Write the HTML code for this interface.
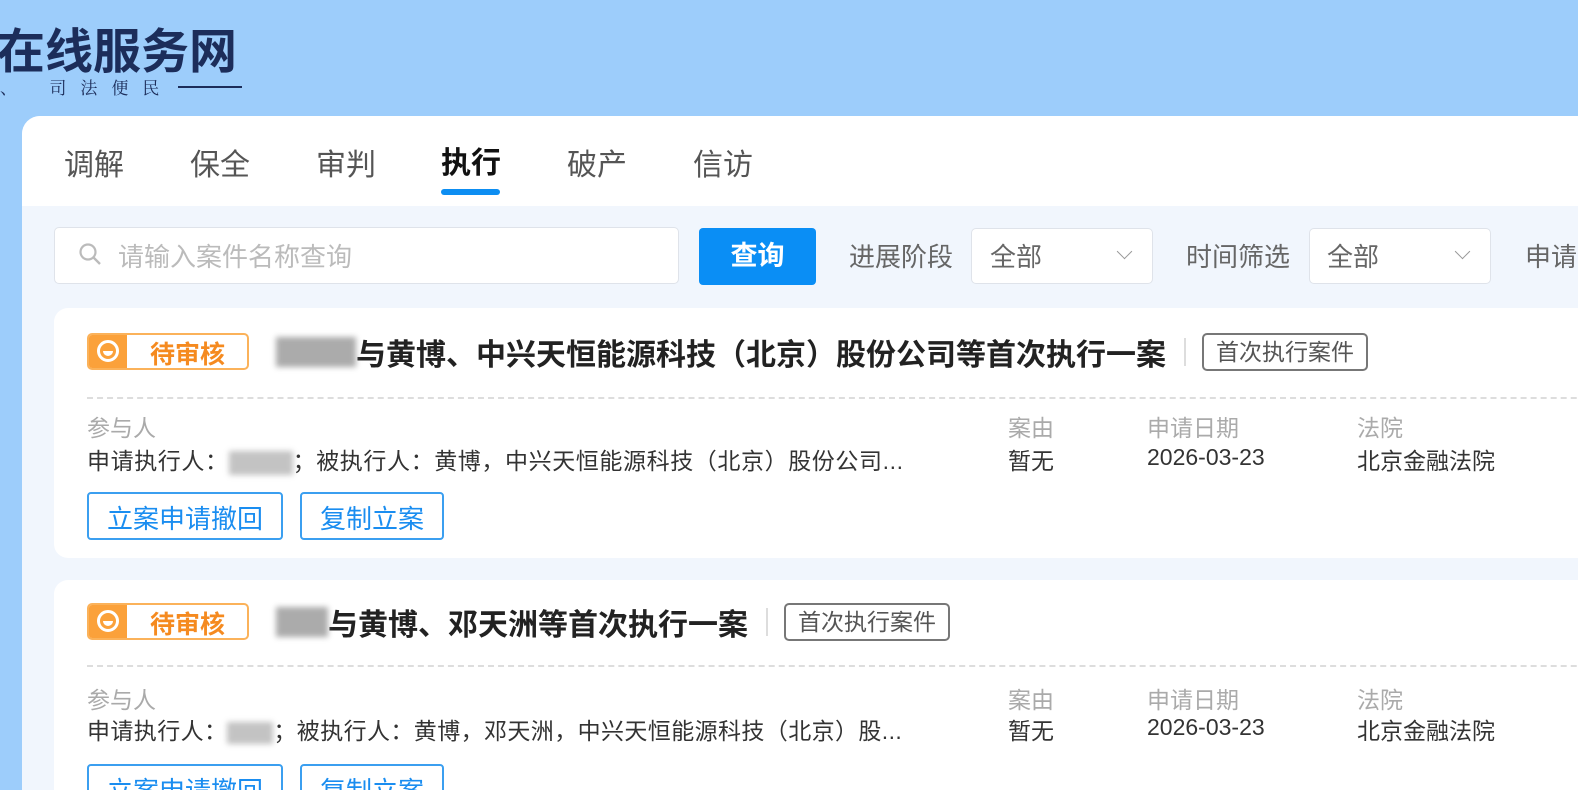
<!DOCTYPE html>
<html><head><meta charset="utf-8"><style>
*{margin:0;padding:0;box-sizing:border-box}
html,body{overflow:hidden}
body{width:1578px;height:790px;overflow:hidden;background:#9dcdfb;font-family:"Liberation Sans","Noto Sans CJK SC",sans-serif;position:relative}
.a{position:absolute;white-space:nowrap}
.logo{left:-3px;top:12px;font-size:48px;font-weight:bold;color:#1c2d5a;letter-spacing:0}
.slog{left:0;top:74px;font-size:17px;color:#1c2d5a;font-family:"Noto Serif CJK SC",serif;letter-spacing:14px}
.panel{left:22px;top:116px;width:1556px;height:674px;background:#f1f6fd;border-radius:18px 0 0 0;overflow:hidden}
.tabs{left:0;top:0;width:100%;height:90px;background:#fff}
.tab{top:24px;font-size:30px;color:#555}
.inp{background:#fff;border:1px solid #dfe3ea;border-radius:5px}
.card{background:#fff;border-radius:14px;width:1600px;overflow:hidden}
.badge{width:162px;height:37px;border:2px solid #fbb25a;border-radius:5px;background:#fff;overflow:hidden}
.badge .l{position:absolute;left:0;top:0;width:38px;height:33px;background:#fba13a}
.badge .l i{position:absolute;left:8px;top:5px;width:22px;height:22px;border:3px solid #fff;border-radius:50%}
.badge .l i:after{content:"";position:absolute;left:3px;top:3px;width:10px;height:10px;background:#fff;border-radius:50%;clip-path:inset(50% 0 0 0)}
.badge span{position:absolute;left:61px;top:0px;font-size:25px;font-weight:bold;color:#f58a1f}
.blur{display:inline-block;background:#888;filter:blur(3px);opacity:.7;vertical-align:middle}
.row{display:flex;align-items:center}
.title{font-size:30px;font-weight:bold;color:#222}
.sep{width:2px;height:28px;background:#ddd;margin:0 16px 0 18px}
.tag{border:2px solid #777;border-radius:5px;font-size:23px;color:#555;padding:0 12px;height:38px;line-height:34px}
.lab{font-size:23px;color:#aaa}
.val{font-size:23px;color:#333}
.btn{border:2px solid #3b9ff0;border-radius:4px;color:#1a8df0;font-size:26px;height:48px;padding:5px 18px 0}
.dash{border-top:2px dashed #ddd;width:1600px}
</style></head><body>
<div class="a logo">在线服务网</div>
<div class="a slog">、 司法便民</div>
<div class="a" style="left:178px;top:86px;width:64px;height:2px;background:#1c2d5a"></div>
<div class="a panel">
 <div class="a tabs">
  <div class="a tab" style="left:42px">调解</div>
  <div class="a tab" style="left:168px">保全</div>
  <div class="a tab" style="left:294px">审判</div>
  <div class="a tab" style="left:419px;color:#111;font-weight:bold;top:22px">执行</div>
  <div class="a" style="left:419px;top:73px;width:59px;height:6px;border-radius:3px;background:#0d8ef2"></div>
  <div class="a tab" style="left:545px">破产</div>
  <div class="a tab" style="left:671px">信访</div>
 </div>
 <div class="a inp" style="left:32px;top:111px;width:625px;height:57px"></div>
 <svg class="a" style="left:56px;top:126px" width="26" height="26" viewBox="0 0 26 26"><circle cx="10" cy="10" r="7.5" fill="none" stroke="#bbb" stroke-width="2.2"/><path d="M15.5 15.5L22 22" stroke="#bbb" stroke-width="2.4"/></svg>
 <div class="a" style="left:96px;top:121px;font-size:26px;color:#bbb">请输入案件名称查询</div>
 <div class="a" style="left:677px;top:112px;width:117px;height:57px;background:#0a8ef5;border-radius:4px;color:#fff;font-size:27px;font-weight:bold;text-align:center;line-height:57px">查询</div>
 <div class="a" style="left:827px;top:121px;font-size:26px;color:#666">进展阶段</div>
 <div class="a inp" style="left:949px;top:112px;width:182px;height:56px"></div>
 <div class="a" style="left:968px;top:121px;font-size:26px;color:#666">全部</div>
 <div class="a" style="left:1097px;top:130px;width:11px;height:11px;border-right:1.5px solid #999;border-bottom:1.5px solid #999;transform:rotate(45deg)"></div>
 <div class="a" style="left:1164px;top:121px;font-size:26px;color:#666">时间筛选</div>
 <div class="a inp" style="left:1287px;top:112px;width:182px;height:56px"></div>
 <div class="a" style="left:1305px;top:121px;font-size:26px;color:#666">全部</div>
 <div class="a" style="left:1435px;top:130px;width:11px;height:11px;border-right:1.5px solid #999;border-bottom:1.5px solid #999;transform:rotate(45deg)"></div>
 <div class="a" style="left:1503px;top:121px;font-size:26px;color:#666">申请</div>

 <div class="a card" style="left:32px;top:192px;height:250px">
  <div class="a badge" style="left:33px;top:25px"><div class="l"><i></i></div><span>待审核</span></div>
  <div class="a row" style="left:222px;top:24px;height:40px">
   <span class="blur" style="width:80px;height:30px"></span>
   <span class="title">与黄博、中兴天恒能源科技（北京）股份公司等首次执行一案</span>
   <span class="sep"></span><span class="tag">首次执行案件</span>
  </div>
  <div class="a dash" style="left:33px;top:89px"></div>
  <div class="a lab" style="left:33px;top:101px">参与人</div>
  <div class="a val" style="left:33px;top:134px;letter-spacing:0.6px">申请执行人：<span class="blur" style="width:64px;height:24px;opacity:.5"></span>；被执行人：黄博，中兴天恒能源科技（北京）股份公司...</div>
  <div class="a lab" style="left:954px;top:101px">案由</div><div class="a val" style="left:954px;top:134px">暂无</div>
  <div class="a lab" style="left:1093px;top:101px">申请日期</div><div class="a val" style="left:1093px;top:136px">2026-03-23</div>
  <div class="a lab" style="left:1303px;top:101px">法院</div><div class="a val" style="left:1303px;top:134px">北京金融法院</div>
  <div class="a btn" style="left:33px;top:184px">立案申请撤回</div>
  <div class="a btn" style="left:246px;top:184px">复制立案</div>
 </div>

 <div class="a card" style="left:32px;top:464px;height:300px">
  <div class="a badge" style="left:33px;top:23px"><div class="l"><i></i></div><span>待审核</span></div>
  <div class="a row" style="left:222px;top:22px;height:40px">
   <span class="blur" style="width:52px;height:30px"></span>
   <span class="title">与黄博、邓天洲等首次执行一案</span>
   <span class="sep"></span><span class="tag">首次执行案件</span>
  </div>
  <div class="a dash" style="left:33px;top:85px"></div>
  <div class="a lab" style="left:33px;top:101px">参与人</div>
  <div class="a val" style="left:33px;top:132px;letter-spacing:0.4px">申请执行人：<span class="blur" style="width:46px;height:22px;opacity:.5"></span>；被执行人：黄博，邓天洲，中兴天恒能源科技（北京）股...</div>
  <div class="a lab" style="left:954px;top:101px">案由</div><div class="a val" style="left:954px;top:132px">暂无</div>
  <div class="a lab" style="left:1093px;top:101px">申请日期</div><div class="a val" style="left:1093px;top:134px">2026-03-23</div>
  <div class="a lab" style="left:1303px;top:101px">法院</div><div class="a val" style="left:1303px;top:132px">北京金融法院</div>
  <div class="a btn" style="left:33px;top:184px">立案申请撤回</div>
  <div class="a btn" style="left:246px;top:184px">复制立案</div>
 </div>
</div>
</body></html>
